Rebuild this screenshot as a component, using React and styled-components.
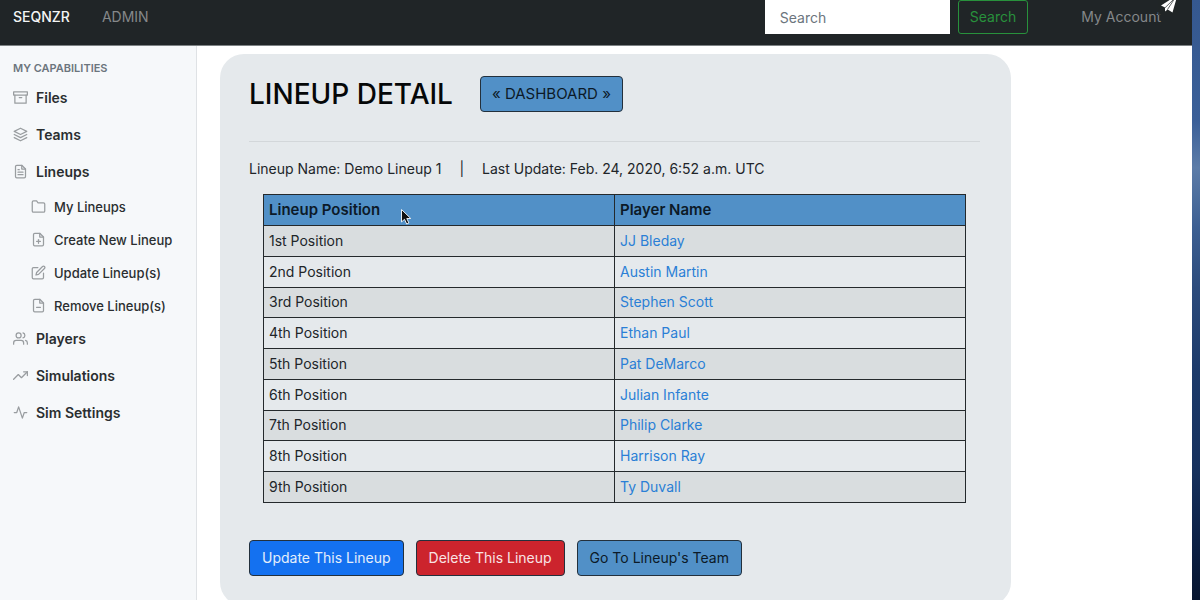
import React from 'react';
import styled, { createGlobalStyle } from 'styled-components';
import {
	FiActivity,
	FiArchive,
	FiEdit,
	FiFileMinus,
	FiFilePlus,
	FiFileText,
	FiFolder,
	FiLayers,
	FiTrendingUp,
	FiUsers
} from 'react-icons/fi';

const GlobalStyle = createGlobalStyle`
	* {
		box-sizing: border-box;
	}

	body {
		margin: 0;
		overflow: hidden;
		color: #212529;
		font-family: Inter, "Liberation Sans", sans-serif;
		font-size: 14px;
		line-height: 20px;
	}

	button, input {
		font: inherit;
	}

	a {
		text-decoration: none;
	}
`;

const Desktop = styled.div`
	position: relative;
	height: 100vh;
	overflow: hidden;
	padding-right: 8px;
	background: linear-gradient(#35588f 0%, #3a5f98 20%, #5c7ca8 28%, #3c5f92 38%, #2c4b7c 48%, #1c3a6a 62%, #16315e 78%, #0c2146 90%, #07152f 100%);
`;

const AppWindow = styled.div`
	display: flex;
	flex-direction: column;
	height: 100%;
	background: #fff;
`;

const Navbar = styled.nav`
	display: flex;
	flex: none;
	align-items: flex-start;
	height: 46px;
	padding: 0 31px 0 13px;
	background: #202527;
	border-bottom: 1px solid #7d8284;
`;

const NavLink = styled.a`
	margin-right: 32px;
	line-height: 34px;
	font-weight: ${props => (props.$brand ? 500 : 400)};
	color: ${props => (props.$brand ? '#f4f5f5' : '#85888a')};
`;

const SearchForm = styled.form`
	display: flex;
	gap: 8px;
	margin-left: auto;
	margin-right: 53px;
`;

const SearchInput = styled.input`
	width: 185px;
	height: 34px;
	padding: 0 15px;
	border: 0;
	background: #fff;

	&::placeholder {
		color: #6c757d;
		opacity: 1;
	}
`;

const SearchButton = styled.button`
	height: 34px;
	padding: 0 11px;
	color: #28913c;
	background: transparent;
	border: 1px solid #28913c;
	border-radius: 3px;
`;

const AccountLink = styled.a`
	line-height: 34px;
	color: #85888a;
`;

const PlaneBadge = styled.span`
	position: absolute;
	top: 0;
	right: 22px;
	background: rgba(32, 37, 39, 0.8);

	svg {
		display: block;
	}
`;

const Body = styled.div`
	display: flex;
	flex: 1;
	min-height: 0;
`;

const Sidebar = styled.aside`
	flex: none;
	width: 197px;
	padding: 12px 13px;
	background: #f6f8fa;
	border-right: 1px solid #dfe2e5;
`;

const SidebarHeading = styled.h2`
	margin: 0 0 1px;
	font-size: 11px;
	font-weight: 600;
	color: #6c757d;
`;

const Menu = styled.ul`
	margin: 0;
	padding: 0;
	list-style: none;
`;

const SubMenu = styled(Menu)`
	margin-bottom: -2px;
	padding-left: 18px;
`;

const MenuLink = styled.a`
	display: flex;
	align-items: center;
	gap: 8px;
	height: ${props => (props.$sub ? 33 : 37)}px;
	font-size: ${props => (props.$sub ? 13 : 14)}px;
	font-weight: ${props => (props.$sub ? 500 : 600)};
	color: #2a2e30;
	white-space: nowrap;

	svg {
		flex: none;
		width: 15px;
		height: 15px;
		color: #999da0;
	}
`;

const Main = styled.main`
	flex: 1;
	min-width: 0;
	padding: 8px 181px 0 23px;
`;

const Card = styled.section`
	padding: 22px 31px 30px 29px;
	background: #e5e9ec;
	border-radius: 24px;
`;

const CardHeader = styled.header`
	display: flex;
	align-items: center;
	gap: 27px;
	padding-bottom: 29px;
	border-bottom: 1px solid #d3d7da;
`;

const Title = styled.h1`
	margin: 0;
	font-size: 28px;
	font-weight: 500;
	line-height: 36px;
	color: #050708;
`;

const Button = styled.button`
	height: 36px;
	padding: 0 ${props => (props.$large ? 11 : 12)}px;
	font-size: ${props => (props.$large ? 15 : 14)}px;
	color: ${props => props.$color || '#0c1a28'};
	background: ${props => props.$background || '#5190c7'};
	border: 1px solid #23303c;
	border-radius: 4px;
`;

const Summary = styled.p`
	display: flex;
	gap: 18px;
	margin: 17px 0 15px;
`;

const LineupTable = styled.table`
	width: calc(100% - 28px);
	height: 309px;
	margin: 0 14px;
	border-collapse: collapse;
	table-layout: fixed;

	th, td {
		height: 30px;
		padding: 0 5px;
		border: 1px solid #24292c;
		text-align: left;
	}

	th {
		height: 31px;
		background: #5190c7;
		color: #0c1a28;
		font-size: 15px;
		font-weight: 600;
	}

	tbody tr:nth-child(odd) {
		background: #d9dddf;
	}

	a {
		color: #2a7fd6;
	}
`;

const Actions = styled.div`
	display: flex;
	gap: 12px;
	margin-top: 37px;
`;

const Pointer = styled.svg`
	position: absolute;
	top: 208px;
	left: 400px;
`;

const players = [
	['1st Position', 'JJ Bleday'],
	['2nd Position', 'Austin Martin'],
	['3rd Position', 'Stephen Scott'],
	['4th Position', 'Ethan Paul'],
	['5th Position', 'Pat DeMarco'],
	['6th Position', 'Julian Infante'],
	['7th Position', 'Philip Clarke'],
	['8th Position', 'Harrison Ray'],
	['9th Position', 'Ty Duvall']
];

const menuItems = [
	{ label: 'Files', icon: FiArchive },
	{ label: 'Teams', icon: FiLayers },
	{
		label: 'Lineups',
		icon: FiFileText,
		children: [
			{ label: 'My Lineups', icon: FiFolder },
			{ label: 'Create New Lineup', icon: FiFilePlus },
			{ label: 'Update Lineup(s)', icon: FiEdit },
			{ label: 'Remove Lineup(s)', icon: FiFileMinus }
		]
	},
	{ label: 'Players', icon: FiUsers },
	{ label: 'Simulations', icon: FiTrendingUp },
	{ label: 'Sim Settings', icon: FiActivity }
];

const MenuItem = ({ item, sub }) => {
	const Icon = item.icon;
	return (
		<li>
			<MenuLink href="#" $sub={sub}><Icon />{item.label}</MenuLink>
			{item.children && (
				<SubMenu>
					{item.children.map(child => <MenuItem key={child.label} item={child} sub />)}
				</SubMenu>
			)}
		</li>
	);
};

const App = () => (
	<Desktop>
		<GlobalStyle />
		<AppWindow>
			<Navbar>
				<NavLink href="#" $brand>SEQNZR</NavLink>
				<NavLink href="#">ADMIN</NavLink>
				<SearchForm onSubmit={event => event.preventDefault()}>
					<SearchInput type="text" placeholder="Search" aria-label="Search" />
					<SearchButton type="submit">Search</SearchButton>
				</SearchForm>
				<AccountLink href="#">My Account</AccountLink>
			</Navbar>
			<Body>
				<Sidebar>
					<SidebarHeading>MY CAPABILITIES</SidebarHeading>
					<Menu>
						{menuItems.map(item => <MenuItem key={item.label} item={item} />)}
					</Menu>
				</Sidebar>
				<Main>
					<Card>
						<CardHeader>
							<Title>LINEUP DETAIL</Title>
							<Button type="button" $large>« DASHBOARD »</Button>
						</CardHeader>
						<Summary>
							<span>Lineup Name: Demo Lineup 1</span>
							<span>|</span>
							<span>Last Update: Feb. 24, 2020, 6:52 a.m. UTC</span>
						</Summary>
						<LineupTable>
							<thead>
								<tr>
									<th scope="col">Lineup Position</th>
									<th scope="col">Player Name</th>
								</tr>
							</thead>
							<tbody>
								{players.map(([position, name]) => (
									<tr key={position}>
										<td>{position}</td>
										<td><a href="#">{name}</a></td>
									</tr>
								))}
							</tbody>
						</LineupTable>
						<Actions>
							<Button type="button" $background="#1471f0" $color="#e3eefb">Update This Lineup</Button>
							<Button type="button" $background="#cc242d" $color="#f8e3e4">Delete This Lineup</Button>
							<Button type="button">Go To Lineup's Team</Button>
						</Actions>
					</Card>
				</Main>
			</Body>
		</AppWindow>
		<PlaneBadge>
			<svg width="20" height="15" viewBox="0 0 20 15">
				<path d="M19.500 -5 L3 5.500 L7 7.500 V11.500 L9.700 9.500 L14.500 12.500 Z" fill="#fff" />
				<path d="M7 7.800 L17 -2 L9.500 9.500" fill="none" stroke="#202527" strokeWidth="0.700" />
			</svg>
		</PlaneBadge>
		<Pointer width="12" height="18" viewBox="0 0 12 18">
			<path d="M1.500 1.500 V14 L4.500 11.300 L6.700 16 L8.900 15 L6.800 10.500 H10.800 Z" fill="#111" stroke="#e8eef4" />
		</Pointer>
	</Desktop>
);

export default App;
